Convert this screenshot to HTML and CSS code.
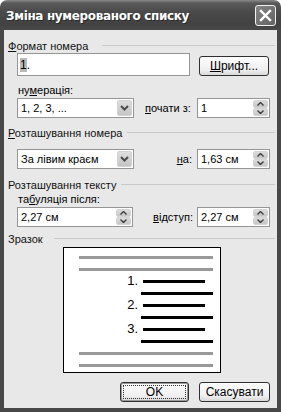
FILE: index.html
```html
<!DOCTYPE html>
<html lang="uk">
<head>
    <meta charset="UTF-8">
    <title>Зміна нумерованого списку</title>
    <link rel="stylesheet" href="styles.css">
</head>
<body>
<div class="window">
    <div class="titlebar">
        <span class="title">Зміна нумерованого списку</span>
        <span class="close">
            <svg width="19" height="19" viewBox="0 0 19 19">
                <path d="M5 5 L14 14 M14 5 L5 14" stroke="#fff" stroke-width="2.4" stroke-linecap="square"/>
            </svg>
        </span>
    </div>
    <div class="client">
        <!-- Формат номера -->
        <div class="legend legend-format"><span><u>Ф</u>ормат номера</span><i class="rule"></i></div>
        <div class="format-row">
            <div class="numfmt"><span class="field-shade">1</span>.</div>
            <div class="btn btn-font"><u>Ш</u>рифт...</div>
        </div>
        <div class="field-label">ну<u>м</u>ерація:</div>
        <div class="row">
            <div class="select">
                <span class="value">1, 2, 3, ...</span>
                <span class="drop"><svg width="9" height="6" viewBox="0 0 9 6"><path d="M1 1 L4.5 4.5 L8 1" fill="none" stroke="#4a4a4a" stroke-width="2"/></svg></span>
            </div>
            <span class="inline-label label-start"><u>п</u>очати з:</span>
            <div class="spin spin-right">
                <span class="value">1</span>
                <span class="arrows">
                    <span class="arrow"><svg width="7" height="4" viewBox="0 0 7 4"><path d="M0.5 3.5 L3.5 0.5 L6.5 3.5" fill="none" stroke="#3c3c3c" stroke-width="1.4"/></svg></span>
                    <span class="arrow"><svg width="7" height="4" viewBox="0 0 7 4"><path d="M0.5 0.5 L3.5 3.5 L6.5 0.5" fill="none" stroke="#3c3c3c" stroke-width="1.4"/></svg></span>
                </span>
            </div>
        </div>

        <!-- Розташування номера -->
        <div class="legend legend-pos"><span><u>Р</u>озташування номера</span><i class="rule"></i></div>
        <div class="row row-pos">
            <div class="select">
                <span class="value">За лівим краєм</span>
                <span class="drop"><svg width="9" height="6" viewBox="0 0 9 6"><path d="M1 1 L4.5 4.5 L8 1" fill="none" stroke="#4a4a4a" stroke-width="2"/></svg></span>
            </div>
            <span class="inline-label label-at"><u>н</u>а:</span>
            <div class="spin">
                <span class="value">1,63 см</span>
                <span class="arrows">
                    <span class="arrow"><svg width="7" height="4" viewBox="0 0 7 4"><path d="M0.5 3.5 L3.5 0.5 L6.5 3.5" fill="none" stroke="#3c3c3c" stroke-width="1.4"/></svg></span>
                    <span class="arrow"><svg width="7" height="4" viewBox="0 0 7 4"><path d="M0.5 0.5 L3.5 3.5 L6.5 0.5" fill="none" stroke="#3c3c3c" stroke-width="1.4"/></svg></span>
                </span>
            </div>
        </div>

        <!-- Розташування тексту -->
        <div class="legend legend-text"><span>Розташування тексту</span><i class="rule"></i></div>
        <div class="field-label label-tab">та<u>б</u>уляція після:</div>
        <div class="row">
            <div class="spin spin-wide">
                <span class="value">2,27 см</span>
                <span class="arrows">
                    <span class="arrow"><svg width="7" height="4" viewBox="0 0 7 4"><path d="M0.5 3.5 L3.5 0.5 L6.5 3.5" fill="none" stroke="#3c3c3c" stroke-width="1.4"/></svg></span>
                    <span class="arrow"><svg width="7" height="4" viewBox="0 0 7 4"><path d="M0.5 0.5 L3.5 3.5 L6.5 0.5" fill="none" stroke="#3c3c3c" stroke-width="1.4"/></svg></span>
                </span>
            </div>
            <span class="inline-label label-indent"><u>в</u>ідступ:</span>
            <div class="spin">
                <span class="value">2,27 см</span>
                <span class="arrows">
                    <span class="arrow"><svg width="7" height="4" viewBox="0 0 7 4"><path d="M0.5 3.5 L3.5 0.5 L6.5 3.5" fill="none" stroke="#3c3c3c" stroke-width="1.4"/></svg></span>
                    <span class="arrow"><svg width="7" height="4" viewBox="0 0 7 4"><path d="M0.5 0.5 L3.5 3.5 L6.5 0.5" fill="none" stroke="#3c3c3c" stroke-width="1.4"/></svg></span>
                </span>
            </div>
        </div>

        <!-- Зразок -->
        <div class="legend legend-sample"><span>Зразок</span><i class="rule"></i></div>
        <div class="preview">
            <div class="pv-row"><i class="ln ln-gray"></i></div>
            <div class="pv-row"><i class="ln ln-gray"></i></div>
            <div class="pv-row"><span class="num">1.</span><i class="ln ln-short"></i></div>
            <div class="pv-row"><i class="ln ln-long"></i></div>
            <div class="pv-row"><span class="num">2.</span><i class="ln ln-short"></i></div>
            <div class="pv-row"><i class="ln ln-long"></i></div>
            <div class="pv-row"><span class="num">3.</span><i class="ln ln-short"></i></div>
            <div class="pv-row"><i class="ln ln-long"></i></div>
            <div class="pv-row"><i class="ln ln-gray"></i></div>
            <div class="pv-row"><i class="ln ln-gray"></i></div>
        </div>

        <div class="buttons">
            <div class="btn btn-ok"><span class="focus">OK</span></div>
            <div class="btn btn-cancel">Скасувати</div>
        </div>
    </div>
</div>
</body>
</html>
```

FILE: styles.css
```css
* {
    box-sizing: border-box;
}

body {
    margin: 0;
    background: #fff;
    font-family: "Liberation Sans", Arial, sans-serif;
    font-size: 11px;
    color: #000;
}

.window {
    width: 281px;
    height: 412px;
    display: flex;
    flex-direction: column;
}

/* Заголовок вікна */
.titlebar {
    height: 30px;
    flex: none;
    display: flex;
    align-items: center;
    justify-content: space-between;
    padding: 0 5px 0 6px;
    background: linear-gradient(#8a8a8a, #5a5a5a 3px, #4a4a4a 12px, #424242 24px, #484848);
    border-radius: 7px 7px 0 0;
}

.title {
    color: #fff;
    font-family: "DejaVu Sans", sans-serif;
    font-weight: bold;
    font-size: 12px;
    letter-spacing: -0.35px;
    text-shadow: 1px 1px 0 #2a2a2a;
    margin-top: 1px;
}

.close {
    width: 21px;
    height: 21px;
    display: flex;
    align-items: center;
    justify-content: center;
    border: 1px solid #f2f2f2;
    border-radius: 3px;
    background: linear-gradient(135deg, #858585, #626262);
}

.client {
    flex: 1;
    background: #e8e8e8;
    border: 4px solid #484848;
    border-top: 0;
    display: flex;
    flex-direction: column;
}

/* Заголовки груп */
.legend {
    display: flex;
    align-items: center;
    height: 14px;
    margin: 8px 2px 0 4px;
    color: #111;
}

.legend .rule {
    flex: 1;
    height: 1px;
    margin-top: -2px;
    background: #c8c8c8;
}

.legend-format {
    margin-top: 9px;
}

.legend-format .rule {
    margin-left: 14px;
}

.legend-pos .rule,
.legend-text .rule {
    margin-left: 5px;
}

.legend-text {
    margin-top: 9px;
}

.legend-sample {
    margin-top: 5px;
}

.legend-sample .rule {
    margin-left: 11px;
}

.field-label {
    height: 14px;
    margin: 8px 0 0 14px;
}

.label-tab {
    margin-top: 1px;
}

/* Рядки з полями */
.format-row {
    display: flex;
    height: 23px;
    margin-left: 13px;
}

.numfmt {
    width: 173px;
    height: 23px;
    border: 1px solid #959595;
    background: #fff;
    padding: 4px 0 0 2px;
    font-size: 12px;
}

.field-shade {
    background: #b9b9b9;
}

.row {
    display: flex;
    align-items: center;
    height: 20px;
    margin-left: 13px;
    margin-right: 7px;
}

.row-pos {
    margin-top: 9px;
}

.legend-pos {
    margin-top: 8px;
}

.value {
    flex: 1;
    padding-left: 2px;
    white-space: nowrap;
}

.select {
    width: 117px;
    height: 20px;
    display: flex;
    align-items: center;
    border: 1px solid #959595;
    background: #fff;
    padding: 1px;
}

.drop {
    width: 15px;
    height: 16px;
    display: flex;
    align-items: center;
    justify-content: center;
    border: 1px solid #d2d2d2;
    border-radius: 2px;
    background: linear-gradient(#dedede, #c4c4c4);
}

.inline-label {
    white-space: nowrap;
}

.label-start {
    margin-left: 11px;
}

.label-at {
    margin-left: auto;
    margin-right: 5px;
}

.label-indent {
    margin-left: auto;
    margin-right: 4px;
}

.spin {
    width: 73px;
    height: 20px;
    display: flex;
    align-items: center;
    border: 1px solid #959595;
    background: #fff;
    padding: 1px;
}

.spin-right {
    margin-left: auto;
}

.spin-wide {
    width: 116px;
}

.arrows {
    width: 15px;
    height: 16px;
    display: flex;
    flex-direction: column;
}

.arrow {
    flex: 1;
    display: flex;
    align-items: center;
    justify-content: center;
    border: 1px solid #d4d4d4;
    border-radius: 2px;
    background: linear-gradient(#dcdcdc, #c6c6c6);
}

/* Зразок */
.preview {
    width: 158px;
    height: 126px;
    margin: 1px 0 0 59px;
    border: 1px solid #000;
    background: #fff;
    padding: 3px 0 1px;
}

.pv-row {
    height: 12px;
    display: flex;
    align-items: center;
}

.ln {
    height: 3px;
    background: #000;
}

.ln-gray {
    width: 134px;
    margin-left: 15px;
    background: #999;
}

.ln-short {
    width: 62px;
    margin-left: 5px;
}

.ln-long {
    width: 72px;
    margin-left: 77px;
}

.num {
    width: 74px;
    text-align: right;
    font-size: 13px;
    line-height: 12px;
}

/* Кнопки */
.btn {
    height: 20px;
    display: flex;
    align-items: center;
    justify-content: center;
    border: 1px solid #303030;
    border-radius: 3px;
    background: linear-gradient(#fdfdfd, #f0f0f0 70%, #d9d9d9);
    font-size: 12px;
}

.btn-font {
    width: 70px;
    margin: 3px 0 0 9px;
}

.buttons {
    display: flex;
    justify-content: flex-end;
    margin: 9px 7px 0 0;
}

.btn-ok {
    width: 69px;
    margin-right: 10px;
    padding: 2px;
    box-shadow: inset 0 0 0 1px #9a9a9a;
}

.focus {
    flex: 1;
    align-self: stretch;
    display: flex;
    align-items: center;
    justify-content: center;
    border: 1px dotted #333;
}

.btn-cancel {
    width: 71px;
}
```
